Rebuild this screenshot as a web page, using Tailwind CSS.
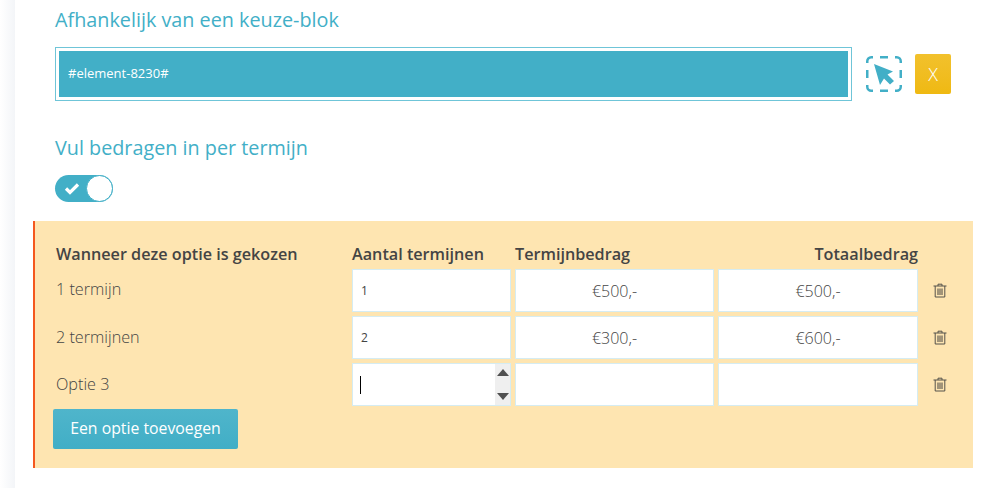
<!DOCTYPE html>
<html lang="nl">
<head>
<meta charset="utf-8">
<script src="https://cdn.jsdelivr.net/npm/@tailwindcss/browser@4"></script>
</head>
<body class="bg-white overflow-hidden">
<div class="w-[1001px] h-[488px] overflow-hidden flex font-['Open_Sans',sans-serif] text-[#444]">
  <div class="w-[15px] shrink-0 bg-gradient-to-r from-white to-[#f3f5f8]"></div>
  <div class="w-[18px] shrink-0"></div>
  <main class="w-[940px]">
    <section class="pl-[22px]">
      <h3 class="text-[19.8px] leading-[24px] pt-[8px] pb-[1px] text-[#42afc7]">Afhankelijk van een keuze-blok</h3>
      <div class="flex items-center mt-[14px]">
        <div class="w-[797px] h-[54px] border border-[#6fc5d8] p-[3px]">
          <div class="h-full bg-[#42afc7] text-white text-[13px] flex items-center pl-[9px]">#element-8230#</div>
        </div>
        <svg class="ml-[14px] w-[36px] h-[36px]" viewBox="0 0 36 36" fill="none">
          <path d="M1.25 7V5.25a4 4 0 0 1 4-4H7M14 1.25h8M29 1.25h1.75a4 4 0 0 1 4 4V7M34.75 14v8M34.75 29v1.75a4 4 0 0 1-4 4H29M22 34.75h-8M7 34.75H5.25a4 4 0 0 1-4-4V29M1.25 22v-8" stroke="#42afc7" stroke-width="2.5"/>
          <path d="M8 8l19 7.5-5.5 3L28 25l-4 3.5-6-6L14 29z" fill="#42afc7"/>
        </svg>
        <button class="ml-[13px] w-[36px] h-[40px] rounded-[2px] bg-gradient-to-b from-[#f2c12c] to-[#efb911] text-white text-[18px] font-light">X</button>
      </div>
      <h3 class="text-[19.8px] leading-[24px] mt-[35px] text-[#42afc7]">Vul bedragen in per termijn</h3>
      <div class="relative mt-[15px] w-[58px] h-[27px] rounded-full bg-[#42afc7] flex items-center pl-[9px]">
        <svg class="w-[16px] h-[13px]" viewBox="0 0 16 13" fill="none"><path d="M2 6.5l4 4 8-8" stroke="white" stroke-width="3.2"/></svg>
        <div class="absolute right-0 top-0 w-[27px] h-[27px] rounded-full bg-white border border-[#42afc7]"></div>
      </div>
    </section>
    <section class="relative mt-[19px] h-[247px] bg-[#fee5b1] border-l-2 border-[#f4581f] pt-[19px] pl-[21px]">
      <div class="flex h-[29px] items-center font-semibold text-[16.2px] text-[#444]">
        <div class="w-[296px]">Wanneer deze optie is gekozen</div>
        <div class="w-[163px]">Aantal termijnen</div>
        <div class="w-[403px] flex justify-between"><span>Termijnbedrag</span><span>Totaalbedrag</span></div>
      </div>
      <div class="flex flex-col gap-[4px]">
        <div class="flex items-center h-[43px]">
          <div class="w-[296px] pb-[2px] text-[16.2px] font-light">1 termijn</div>
          <div class="w-[159px] h-full bg-white border border-[#d5ecf2] flex items-center pl-[8px] text-[12px]">1</div>
          <div class="ml-[4px] w-[199px] h-full bg-white border border-[#d5ecf2] flex items-center justify-center text-[16px] font-light">€500,-</div>
          <div class="ml-[4px] w-[200px] h-full bg-white border border-[#d5ecf2] flex items-center justify-center text-[16px] font-light">€500,-</div>
          <svg class="ml-[15px] w-[14px] h-[15px]" viewBox="0 0 14 15" fill="none" stroke="#55524a"><path d="M.5 3h13M5 3V1.2h4V3M2.2 3v11h9.6V3"/><path d="M5 5.5v6.5M7 5.5v6.5M9 5.5v6.5" stroke-width="1.1"/></svg>
        </div>
        <div class="flex items-center h-[43px]">
          <div class="w-[296px] text-[16.2px] font-light">2 termijnen</div>
          <div class="w-[159px] h-full bg-white border border-[#d5ecf2] flex items-center pl-[8px] text-[12px]">2</div>
          <div class="ml-[4px] w-[199px] h-full bg-white border border-[#d5ecf2] flex items-center justify-center text-[16px] font-light">€300,-</div>
          <div class="ml-[4px] w-[200px] h-full bg-white border border-[#d5ecf2] flex items-center justify-center text-[16px] font-light">€600,-</div>
          <svg class="ml-[15px] w-[14px] h-[15px]" viewBox="0 0 14 15" fill="none" stroke="#55524a"><path d="M.5 3h13M5 3V1.2h4V3M2.2 3v11h9.6V3"/><path d="M5 5.5v6.5M7 5.5v6.5M9 5.5v6.5" stroke-width="1.1"/></svg>
        </div>
        <div class="flex items-center h-[43px]">
          <div class="w-[296px] text-[16.2px] font-light">Optie 3</div>
          <div class="w-[159px] h-full bg-white border border-[#d5ecf2] flex items-center justify-between pl-[7px]">
            <div class="w-[1px] h-[18px] bg-black"></div>
            <div class="w-[15px] h-full bg-[#efefef] flex flex-col items-center justify-between py-[5px]">
              <svg class="w-[12px] h-[7px]" viewBox="0 0 12 7"><path d="M6 0l6 7H0z" fill="#505050"/></svg>
              <svg class="w-[12px] h-[7px]" viewBox="0 0 12 7"><path d="M0 0h12L6 7z" fill="#505050"/></svg>
            </div>
          </div>
          <div class="ml-[4px] w-[199px] h-full bg-white border border-[#d5ecf2]"></div>
          <div class="ml-[4px] w-[200px] h-full bg-white border border-[#d5ecf2]"></div>
          <svg class="ml-[15px] w-[14px] h-[15px]" viewBox="0 0 14 15" fill="none" stroke="#55524a"><path d="M.5 3h13M5 3V1.2h4V3M2.2 3v11h9.6V3"/><path d="M5 5.5v6.5M7 5.5v6.5M9 5.5v6.5" stroke-width="1.1"/></svg>
        </div>
      </div>
      <button class="-ml-[3px] mt-[3px] w-[185px] h-[40px] rounded-[2px] bg-gradient-to-b from-[#4fb5cb] to-[#41aec6] text-white text-[15.8px]">Een optie toevoegen</button>
    </section>
  </main>
</div>
</body>
</html>
